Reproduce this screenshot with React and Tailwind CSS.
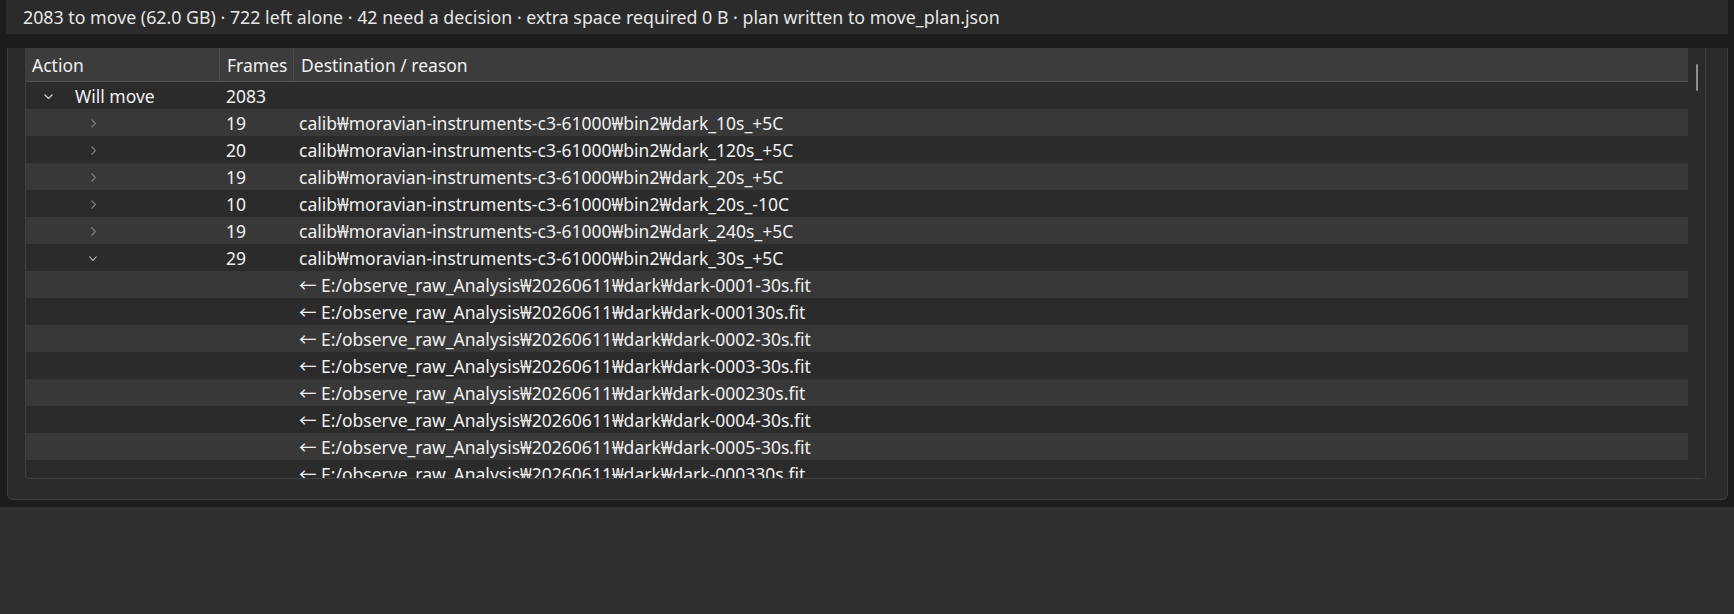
const chevronDown = (color, w = 9, h = 5) => (
  <svg width={w} height={h} viewBox={`0 0 ${w} ${h}`} className="block">
    <polyline points={`0.5,0.5 ${w / 2},${h - 0.5} ${w - 0.5},0.5`} fill="none" stroke={color} strokeWidth="1.1" />
  </svg>
);

const chevronRight = (color) => (
  <svg width="5" height="9" viewBox="0 0 5 9" className="block">
    <polyline points="0.5,0.5 4.5,4.5 0.5,8.5" fill="none" stroke={color} strokeWidth="1.1" />
  </svg>
);

const groups = [
  { frames: 19, dest: "calib₩moravian-instruments-c3-61000₩bin2₩dark_10s_+5C" },
  { frames: 20, dest: "calib₩moravian-instruments-c3-61000₩bin2₩dark_120s_+5C" },
  { frames: 19, dest: "calib₩moravian-instruments-c3-61000₩bin2₩dark_20s_+5C" },
  { frames: 10, dest: "calib₩moravian-instruments-c3-61000₩bin2₩dark_20s_-10C" },
  { frames: 19, dest: "calib₩moravian-instruments-c3-61000₩bin2₩dark_240s_+5C" },
  { frames: 29, dest: "calib₩moravian-instruments-c3-61000₩bin2₩dark_30s_+5C", open: true },
];

const sources = [
  "dark-0001-30s.fit",
  "dark-000130s.fit",
  "dark-0002-30s.fit",
  "dark-0003-30s.fit",
  "dark-000230s.fit",
  "dark-0004-30s.fit",
  "dark-0005-30s.fit",
  "dark-000330s.fit",
];

function Row({ index, action, frames, dest }) {
  const bg = index % 2 === 0 ? "bg-[#2b2b2b]" : "bg-[#383838]";
  return (
    <div className={`flex h-[27px] shrink-0 items-center pt-px ${bg}`}>
      <div className="flex w-[194px] shrink-0 items-center">{action}</div>
      <div className="w-[74px] shrink-0 pl-[6px]">{frames}</div>
      <div className="flex-1 whitespace-nowrap pl-[5px]">{dest}</div>
    </div>
  );
}

export default function App() {
  let i = 0;
  const rows = [];
  rows.push(
    <Row
      key="root"
      index={i++}
      frames="2083"
      dest=""
      action={
        <>
          <span className="ml-[18px] w-[9px]">{chevronDown("#d4d4d4", 9, 5)}</span>
          <span className="ml-[22px]">Will move</span>
        </>
      }
    />
  );
  groups.forEach((g, k) => {
    rows.push(
      <Row
        key={"g" + k}
        index={i++}
        frames={g.frames}
        dest={g.dest}
        action={
          g.open ? (
            <span className="ml-[63px]">{chevronDown("#c4c4c4", 8, 5)}</span>
          ) : (
            <span className="ml-[65px]">{chevronRight("#808080")}</span>
          )
        }
      />
    );
  });
  sources.forEach((s, k) => {
    rows.push(
      <Row
        key={"s" + k}
        index={i++}
        frames=""
        dest={`← E:/observe_raw_Analysis₩20260611₩dark₩${s}`}
        action={null}
      />
    );
  });

  return (
    <div
      className="h-[614px] w-[1734px] overflow-hidden bg-[#303030] text-[17.5px] leading-[24px] text-[#f0f0f0]"
      style={{ fontFamily: '"Noto Sans", "Noto Sans CJK KR", sans-serif' }}
    >
      <div className="bg-[#1c1c1c] px-[6px] pb-[7px]">
        {/* summary line */}
        <div className="flex h-[34px] items-center bg-[#2b2b2b] pl-[17px] text-[17.8px] text-[#e6e6e6]">
          2083 to move (62.0 GB) · 722 left alone · 42 need a decision · extra space required 0 B · plan written to move_plan.json
        </div>

        {/* plan card */}
        <div className="ml-px mt-[14px] h-[452px] rounded-b-[6px] border border-t-0 border-[#3d3d3d] bg-[#2b2b2b] pl-[17px] pr-[21px]">
          <div className="flex h-[431px] overflow-hidden rounded-b-[5px] border border-t-0 border-[#404040]">
            <div className="flex min-w-0 flex-1 flex-col">
              {/* column headers */}
              <div className="flex h-[34px] shrink-0 items-center border-b border-[#545454] bg-[#3c3c3c] pt-px">
                <div className="flex h-full w-[193px] shrink-0 items-center pl-[6px]">Action</div>
                <div className="h-full w-px bg-[#4c4c4c]" />
                <div className="flex h-full w-[73px] shrink-0 items-center pl-[7px]">Frames</div>
                <div className="h-full w-px bg-[#4c4c4c]" />
                <div className="flex h-full flex-1 items-center pl-[7px]">Destination / reason</div>
              </div>
              {rows}
            </div>
            {/* scrollbar */}
            <div className="w-[17px] shrink-0 bg-[#2b2b2b] pl-[8px] pt-[16px]">
              <div className="h-[27px] w-[2px] rounded-full bg-[#8e8e8e]" />
            </div>
          </div>
        </div>
      </div>
    </div>
  );
}
